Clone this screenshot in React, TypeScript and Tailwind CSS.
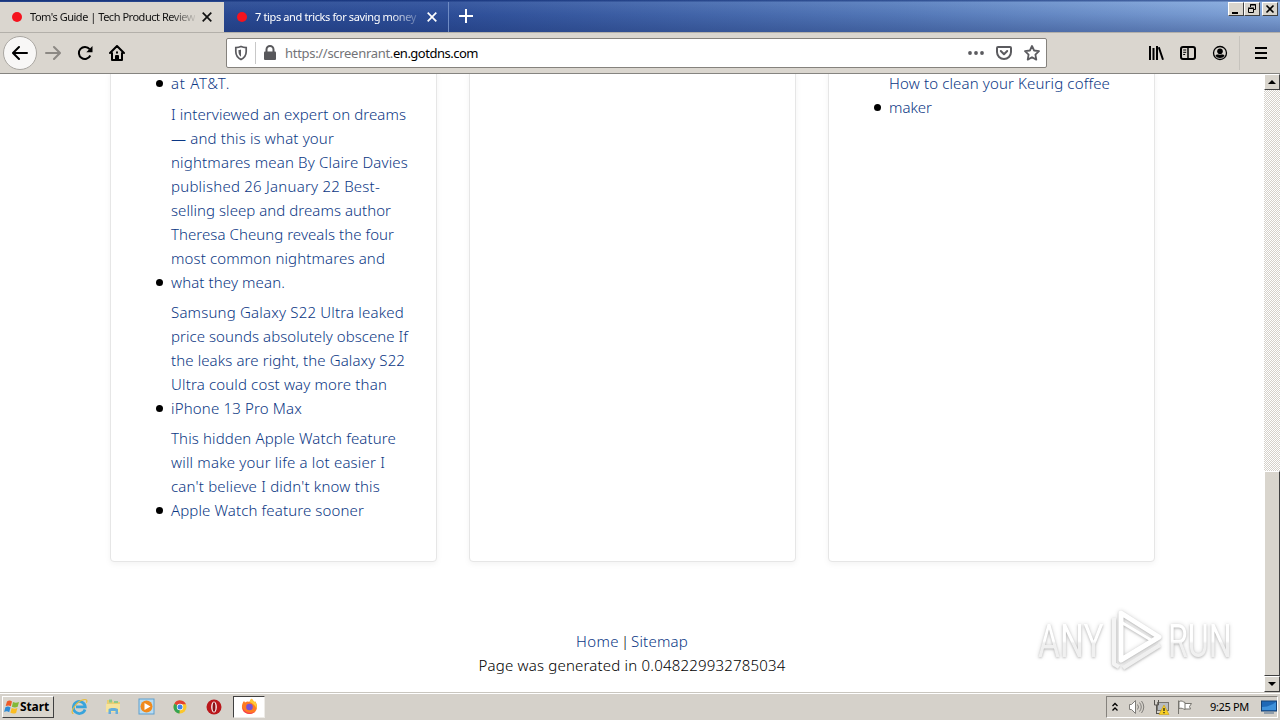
import React, { useLayoutEffect, useRef, useState } from "react";

const raised = "bg-[#d9d5cd] border border-t-white border-l-white border-r-[#404040] border-b-[#404040]";

// text spread over a given width by letter spacing
const Fit = ({ w, className = "", children }: { w: number; className?: string; children: string }) => {
  const ref = useRef<HTMLSpanElement>(null);
  const [space, setSpace] = useState(0);
  useLayoutEffect(() => {
    const natural = ref.current!.getBoundingClientRect().width;
    setSpace((w - natural) / children.length);
  }, []);
  return (
    <span ref={ref} className={`inline-block whitespace-pre ${className}`} style={{ letterSpacing: `${space}px` }}>
      {children}
    </span>
  );
};

type TextLine = [string, number];

const firstColumn: TextLine[][] = [
  [["at AT&T.", 59]],
  [
    ["I interviewed an expert on dreams", 235],
    ["— and this is what your", 163],
    ["nightmares mean By Claire Davies", 237],
    ["published 26 January 22 Best-", 209],
    ["selling sleep and dreams author", 220],
    ["Theresa Cheung reveals the four", 223],
    ["most common nightmares and", 214],
    ["what they mean.", 114],
  ],
  [
    ["Samsung Galaxy S22 Ultra leaked", 233],
    ["price sounds absolutely obscene If", 237],
    ["the leaks are right, the Galaxy S22", 234],
    ["Ultra could cost way more than", 216],
    ["iPhone 13 Pro Max", 131],
  ],
  [
    ["This hidden Apple Watch feature", 225],
    ["will make your life a lot easier I", 214],
    ["can't believe I didn't know this", 209],
    ["Apple Watch feature sooner", 193],
  ],
];

const thirdColumn: TextLine[][] = [
  [
    ["How to clean your Keurig coffee", 221],
    ["maker", 43],
  ],
];

const Card = ({ items }: { items: TextLine[][] }) => (
  <div className="w-[327px] h-[492px] shrink-0 border border-[#e6e6e6] rounded-[4px] shadow-[0_2px_6px_rgba(0,0,0,0.05)] bg-white">
    <ul className="flex flex-col gap-[6px] pl-[44.5px]">
      {items.map((lines, i) => (
        <li key={i} className={`flex items-end ${i === 1 ? "mt-px" : ""}`}>
          <span className="w-[7px] h-[7px] mb-[8px] mr-[8.5px] rounded-full bg-black" />
          <a className="flex flex-col items-start text-[#0b3784]">
            {lines.map(([text, w]) => (
              <Fit key={text} w={w} className="h-6">
                {text}
              </Fit>
            ))}
          </a>
        </li>
      ))}
    </ul>
  </div>
);

const Cross = ({ color }: { color: string }) => (
  <svg width="10" height="10" viewBox="0 0 10 10" fill="none" stroke={color} strokeWidth="1.7">
    <path d="M.7.7l8.6 8.6M9.3.7L.7 9.3" />
  </svg>
);

const TitleBar = () => (
  <div className="flex h-8 bg-[linear-gradient(to_bottom,rgba(10,36,106,.5)_0,rgba(10,36,106,.5)_1px,rgba(255,255,255,.05)_2px,rgba(20,40,110,.1)_45%,rgba(20,40,100,.36)_100%),linear-gradient(to_right,#26468f_0,#30529c_35%,#5a80bf_70%,#8cb0e2_100%)] text-[11px]">
    <div className="w-[224px] h-[30px] mt-[2px] flex items-center bg-[#dad6cf]">
      <span className="w-[10px] h-[10px] ml-3 rounded-full bg-[#f5131e]" />
      <div className="ml-[8px] w-[165px] text-[#111] [mask-image:linear-gradient(to_right,black_140px,transparent_168px)]">
        <Fit w={165}>Tom's Guide | Tech Product Review</Fit>
      </div>
      <span className="ml-[7px]">
        <Cross color="#111" />
      </span>
    </div>
    <div className="w-[225px] h-[30px] mt-[2px] flex items-center border-r border-[#6f8bc4]">
      <span className="w-[10px] h-[10px] ml-[13px] rounded-full bg-[#f5131e]" />
      <div className="ml-[8px] w-[163px] text-white [mask-image:linear-gradient(to_right,black_135px,transparent_170px)]">
        <Fit w={161}>7 tips and tricks for saving money</Fit>
      </div>
      <span className="ml-[9px]">
        <Cross color="#fff" />
      </span>
    </div>
    <svg className="ml-[10px] mt-[9px]" width="14" height="14" stroke="#fff" strokeWidth="2">
      <path d="M7 0v14M0 7h14" />
    </svg>
    <div className="ml-auto mt-[2px] mr-[2px] flex h-[14px]">
      <button className={`w-4 h-[14px] ${raised}`}>
        <svg width="14" height="12">
          <path d="M3 9h6v2H3z" />
        </svg>
      </button>
      <button className={`w-4 h-[14px] ${raised}`}>
        <svg width="14" height="12" fill="none" stroke="#000">
          <path d="M5.500 4V1.500h5v5H9M5 2h6M3.500 5.500h5v4h-5zM3 5h6" />
        </svg>
      </button>
      <button className={`w-4 h-[14px] ml-[2px] ${raised}`}>
        <svg width="14" height="12" stroke="#000" strokeWidth="1.600">
          <path d="M3.500 2.500l7 7M10.500 2.500l-7 7" />
        </svg>
      </button>
    </div>
  </div>
);

const NavBar = () => (
  <div className="h-[42px] flex items-center bg-[#dad6cf] border-t border-t-[#b3b0aa] border-b border-b-[#858480]">
    <span className="ml-[3px] w-[34px] h-[34px] rounded-full bg-[#f8f7f6] border border-[#aaa7a2] flex items-center justify-center">
      <svg width="16" height="16" viewBox="0 0 16 16" fill="none" stroke="#000" strokeWidth="2" strokeLinecap="round" strokeLinejoin="round">
        <path d="M15 8H1.500M7 2L1 8l6 6" />
      </svg>
    </span>
    <svg className="ml-2" width="16" height="16" viewBox="0 0 16 16" fill="none" stroke="#8c8984" strokeWidth="2" strokeLinecap="round" strokeLinejoin="round">
      <path d="M1 8h13.500M9 2l6 6-6 6" />
    </svg>
    <svg className="ml-4" width="16" height="16" viewBox="0 0 16 16" fill="none" stroke="#000" strokeWidth="2">
      <path d="M13.300 10.500A6 6 0 1 1 12.600 4.200" />
      <path d="M15.500 1v6.200H9.300z" fill="#000" stroke="none" />
    </svg>
    <svg className="ml-4" width="16" height="16" viewBox="0 0 16 16" fill="none" stroke="#000" strokeWidth="2" strokeLinecap="round" strokeLinejoin="round">
      <path d="M1 8l7-7 7 7M3 8v7h10V8" />
      <path d="M7 15v-4h2v4M8 7.300v.4" />
    </svg>
    <div className="ml-[101px] w-[821px] h-[30px] bg-white border border-[#85827d] rounded-[2px] flex items-center">
      <svg className="ml-[6px]" width="16" height="16" viewBox="0 0 16 16" fill="none" stroke="#5b5b5f" strokeWidth="1.700">
        <path d="M8 1.500c2 .8 3.800 1 5.200 1.100v4c0 3.800-1.900 6.300-5.200 8-3.300-1.700-5.200-4.200-5.200-8v-4C4.200 2.500 6 2.300 8 1.500z" />
        <path d="M8 4.400v7.300c-1.700-1.200-2.500-2.800-2.500-5.200V5.100c1 0 1.700-.3 2.500-.7z" fill="#5b5b5f" stroke="none" />
      </svg>
      <span className="w-px h-[22px] ml-[6px] bg-[#c8c8c8]" />
      <svg className="ml-[7px]" width="14" height="16" viewBox="0 0 14 16">
        <path d="M3.500 7V4.500a3.500 3.500 0 0 1 7 0V7" fill="none" stroke="#58585b" strokeWidth="2" />
        <rect x="1" y="6.500" width="12" height="8.500" rx="1" fill="#58585b" />
      </svg>
      <div className="ml-2 text-[13px] leading-5 flex">
        <Fit w={108} className="text-[#737377]">
          https://screenrant.
        </Fit>
        <Fit w={85} className="text-black">
          en.gotdns.com
        </Fit>
      </div>
      <svg className="ml-auto" width="16" height="4" fill="#5b5b5f">
        <circle cx="2" cy="2" r="1.900" />
        <circle cx="8" cy="2" r="1.900" />
        <circle cx="14" cy="2" r="1.900" />
      </svg>
      <svg className="ml-3" width="16" height="16" viewBox="0 0 16 16" fill="none" stroke="#5b5b5f" strokeWidth="2" strokeLinecap="round" strokeLinejoin="round">
        <path d="M2 2h12a1 1 0 0 1 1 1v4a7 7 0 0 1-14 0V3a1 1 0 0 1 1-1z" />
        <path d="M4.800 6L8 9.200 11.200 6" />
      </svg>
      <svg className="ml-3 mr-[6px]" width="16" height="16" viewBox="0 0 16 16" fill="none" stroke="#5b5b5f" strokeWidth="1.800" strokeLinejoin="round">
        <path d="M8 1l2.100 4.500 4.900.7-3.600 3.400.9 5L8 12.200 3.700 14.600l.9-5L1 6.200l4.900-.7z" />
      </svg>
    </div>
    <svg className="ml-[101px]" width="16" height="16" viewBox="0 0 16 16" fill="none" stroke="#000" strokeWidth="2">
      <path d="M2 1v14M5.500 3v12M9 1v14M10.800 2.200L15 14.800" />
    </svg>
    <svg className="ml-4" width="16" height="16" viewBox="0 0 16 16" fill="none" stroke="#000" strokeWidth="2">
      <rect x="1" y="2" width="14" height="12" rx="2" />
      <path d="M8 2v12" strokeWidth="1.500" />
      <path d="M3.200 5h3M3.200 7.300h3M3.200 9.500h2" strokeWidth="1" />
    </svg>
    <svg className="ml-4" width="16" height="16" viewBox="0 0 16 16">
      <circle cx="8" cy="8" r="6.500" fill="none" stroke="#000" strokeWidth="1.300" />
      <circle cx="8" cy="6.200" r="2.800" />
      <path d="M3.500 10.500c1-1.400 2.700-.8 4.500-.8s3.500-.6 4.500.8C11.500 12.300 10 13 8 13s-3.500-.7-4.500-2.500z" />
    </svg>
    <span className="w-px h-[34px] ml-[11px] bg-[#c6c3bd]" />
    <svg className="ml-[15px]" width="12" height="12" stroke="#000" strokeWidth="2">
      <path d="M0 1h12M0 6h12M0 11h12" />
    </svg>
  </div>
);

const Scrollbar = () => (
  <div className="w-4 h-[618px] shrink-0 flex flex-col bg-[repeating-conic-gradient(#d5d1ca_0_25%,#fff_0_50%)] bg-[size:2px_2px]">
    <div className={`h-4 flex items-center justify-center ${raised}`}>
      <svg width="8" height="4">
        <path d="M0 4l4-4 4 4z" />
      </svg>
    </div>
    <div className={`mt-[381px] h-[205px] ${raised}`} />
    <div className={`h-4 flex items-center justify-center ${raised}`}>
      <svg width="8" height="4">
        <path d="M0 0l4 4 4-4z" />
      </svg>
    </div>
  </div>
);

const watermarkText = "inline-block font-[Roboto] origin-left text-transparent bg-clip-text bg-[linear-gradient(to_bottom,#fff_50%,#f0f0f0_55%)]";

const Watermark = () => (
  <div className="absolute left-[1038px] top-[608px] w-[200px] h-[64px] flex items-center text-[46px] leading-none [filter:drop-shadow(0_1px_1px_rgba(0,0,0,.2))_drop-shadow(0_0_2px_rgba(0,0,0,.16))]">
    <div className="w-[66px] shrink-0">
      <span className={`${watermarkText} scale-x-[.73]`}>ANY</span>
    </div>
    <svg className="shrink-0" width="60" height="64" viewBox="0 0 60 64" fill="none" stroke="#fff" strokeWidth="5" strokeLinejoin="round">
      <path d="M10 10v46l5 3" stroke="#f4f4f4" strokeWidth="4" />
      <path d="M17 52V5l38 24-38 23z" />
      <path d="M17 14l30 18" strokeWidth="3" />
      <path d="M19 60l37-23" stroke="#f0f0f0" strokeWidth="4" />
    </svg>
    <div className="ml-1 w-[66px] shrink-0">
      <span className={`${watermarkText} scale-x-[.7]`}>RUN</span>
    </div>
  </div>
);

const Taskbar = () => (
  <div className="h-7 flex items-center bg-[#d5d1ca] border-t border-t-[#c9c6bf] shadow-[inset_0_1px_0_#fff]">
    <button className={`ml-[2px] mt-px w-[52px] h-[22px] flex items-center ${raised}`}>
      <svg className="ml-[1px]" width="16" height="16" viewBox="0 0 16 16">
        <path d="M3 2.500c2-1.500 3.500-1 5 0L6.800 7.300c-1.600-1-3-1.200-5.100-.2z" fill="#ee5b27" />
        <path d="M9 3c2 1 3.600 1 6 0l-1.300 4.800c-2 .9-3.800.9-5.800-.1z" fill="#83b938" />
        <path d="M1.400 8.200c2-1 3.500-.8 5.100.2l-1.300 4.800c-1.600-1-3-1.200-5.100-.2z" fill="#2e8bd5" />
        <path d="M7.700 9c2 1 3.800 1 5.700.1l-1.300 4.800c-2 .9-3.700.9-5.700-.1z" fill="#fbbd22" />
      </svg>
      <Fit w={29} className="text-[12px] leading-5 font-bold text-black">
        Start
      </Fit>
    </button>
    {/* internet explorer */}
    <svg className="ml-[17px]" width="17" height="17" viewBox="0 0 17 17" fill="none">
      <path d="M14 11.500A6 6 0 1 1 14.300 8.800H5" stroke="#38a4dc" strokeWidth="2.700" />
      <path d="M2.500 15.500C-2 15 5 4 12 1.800c4-1 4.500.8 3.300 3" stroke="#e6bd3e" strokeWidth="1.200" />
    </svg>
    {/* explorer folder */}
    <svg className="ml-[17px]" width="17" height="17" viewBox="0 0 17 17">
      <path d="M2 2h5l1 2h7v9H2z" fill="#e9cf72" />
      <path d="M4 1.500h3v3H4zM9 3h4v2H9z" fill="#8fc88b" />
      <path d="M1 6h14v8H1z" fill="#f6e39c" />
      <path d="M3.500 16v-4.500c0-2 9.500-2 9.500 0V16h-2.500v-3H6v3z" fill="#66aedb" />
    </svg>
    {/* media player */}
    <svg className="ml-[16px]" width="17" height="17" viewBox="0 0 17 17">
      <rect x="1" y="1" width="15" height="15" fill="#b7dcf3" stroke="#5e9fcd" />
      <circle cx="8.500" cy="8.500" r="6" fill="#f08a1d" />
      <path d="M6.500 5l6 3.500-6 3.500z" fill="#fff" />
    </svg>
    {/* chrome */}
    <svg className="ml-[17px]" width="16" height="16" viewBox="0 0 16 16">
      <circle cx="8" cy="8" r="6.500" fill="#fbc72c" />
      <path d="M8 8L2.400 4.700a6.500 6.500 0 0 1 11.600.5H8z" fill="#e34133" />
      <path d="M8 8l-.5 6.500A6.500 6.500 0 0 1 2.400 4.700z" fill="#34a353" />
      <circle cx="8" cy="8" r="3.200" fill="#fff" />
      <circle cx="8" cy="8" r="2.500" fill="#3c83e8" />
    </svg>
    {/* opera */}
    <svg className="ml-[18px]" width="16" height="16" viewBox="0 0 16 16">
      <circle cx="8" cy="8" r="7.500" fill="#ba171b" />
      <ellipse cx="8" cy="8" rx="2.800" ry="5.600" fill="#fff" />
      <ellipse cx="8" cy="8" rx="1.500" ry="4.700" fill="#8c1116" />
    </svg>
    <div className="ml-[11px] w-8 h-[22px] bg-white border border-t-[#404040] border-l-[#404040] border-r-[#eeece8] border-b-[#eeece8] flex items-center justify-center">
      <svg width="17" height="17" viewBox="0 0 17 17">
        <path d="M3 3l1 1.500C6 3 8 3.500 8.500 4 9 2 10 1 11 .7c.4 1.500 1.700 2 2.500 3.300l.7-.6c2.500 3.500 2.300 7.200.3 9.800-3 3.600-8.700 3.700-11.800.3C.2 10.500.4 6.300 3 3z" fill="#ff7b22" />
        <path d="M11 .7c.4 1.500 1.700 2 2.500 3.300l.7-.6c1.700 2.500 2 5 1.200 7.300-1-3.400-3.700-5.200-6.900-6.700C9 2 10 1 11 .7z" fill="#ffca34" />
        <path d="M1.500 9c1 5 8 8 13 4.200-3 3.600-8.700 3.700-11.800.3A7 7 0 0 1 1.500 9z" fill="#f43a55" />
        <circle cx="8.500" cy="9" r="3.300" fill="#7652d7" />
      </svg>
    </div>
    <div className="ml-auto mr-[2px] w-[172px] h-[22px] flex items-center border border-t-[#85827d] border-l-[#85827d] border-r-white border-b-white">
      <svg className="ml-[5px]" width="6" height="10" fill="none" stroke="#000" strokeWidth="1.300">
        <path d="M.5 4L3 1.500 5.500 4M.5 8.500L3 6l2.500 2.500" />
      </svg>
      <svg className="ml-[10px]" width="17" height="16" fill="#fff" stroke="#7f7d79">
        <path d="M1.500 5.500h2l4-4v13l-4-4h-2z" />
        <path d="M9.500 5.500q2 2.500 0 5M11.500 3.500q3.500 4.500 0 9M13.500 2q4.500 6 0 12" fill="none" />
      </svg>
      <svg className="ml-[8px]" width="17" height="16">
        <rect x="4.500" y="3.500" width="11" height="8" fill="#b8bcc0" stroke="#77756f" />
        <path d="M1.500 1v5h4V1M3.500 6v9M3.500 14.500h4" fill="none" stroke="#55534f" />
        <path d="M11 6l5 9.500H6z" fill="#f8d022" stroke="#c79d12" strokeWidth=".6" />
        <path d="M11 9v3M11 13v1.200" stroke="#222" strokeWidth="1.300" />
      </svg>
      <svg className="ml-[7px]" width="17" height="16" fill="#fff" stroke="#77756f">
        <path d="M1.500 15V1.500M2 2.500c3-1.500 4 .5 6 1v7c-2-.5-3-2-6-1zM8 4.500h6.500l-2 3 1 2.500H8" />
      </svg>
      <Fit w={39} className="ml-[16px] text-[11px] leading-5 text-black">
        9:25 PM
      </Fit>
      <svg className="ml-[12px]" width="16" height="14">
        <rect x=".5" y="1" width="15" height="10" fill="#1f68b6" stroke="#164274" />
        <path d="M1 7Q8 7 15 2v8H1z" fill="#3f91da" />
        <path d="M3 13h10" stroke="#4a6a8c" />
      </svg>
    </div>
  </div>
);

const App = () => {
  return (
    <div className="relative w-[1280px] h-[720px] overflow-hidden bg-white font-['Noto_Sans',sans-serif]">
      <TitleBar />
      <NavBar />
      <div className="h-[618px] flex overflow-hidden">
        <div className="w-[1264px] h-[618px] overflow-hidden text-[15px] leading-6 font-light">
          <div className="flex gap-8 pl-[110px] -mt-[4px]">
            <Card items={firstColumn} />
            <Card items={[]} />
            <Card items={thirdColumn} />
          </div>
          <div className="mt-[67px] flex flex-col items-center">
            <div className="flex">
              <Fit w={43} className="text-[#0b3784]">Home</Fit>
              <span className="w-[12px] text-center text-black">|</span>
              <Fit w={57} className="text-[#0b3784]">Sitemap</Fit>
            </div>
            <Fit w={307} className="text-black">Page was generated in 0.048229932785034</Fit>
          </div>
        </div>
        <Scrollbar />
      </div>
      <Taskbar />
      <Watermark />
    </div>
  );
};

export default App;
